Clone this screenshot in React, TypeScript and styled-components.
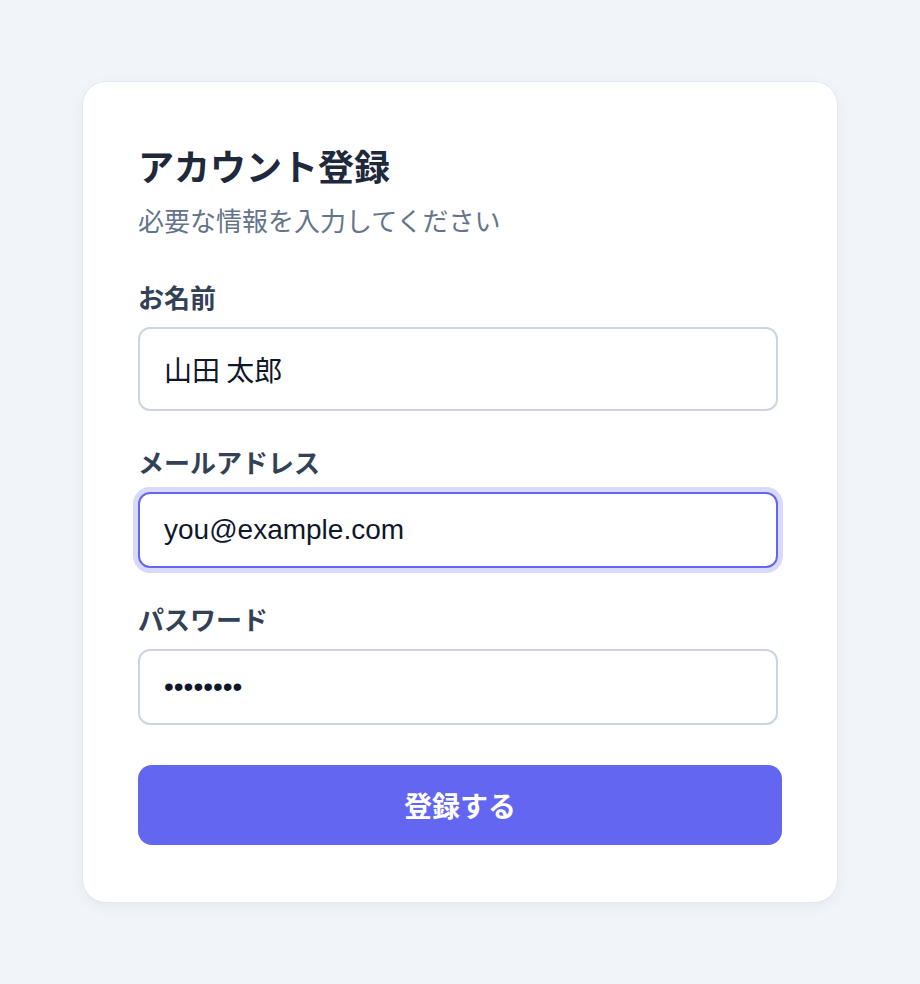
import React from "react";
import styled, { createGlobalStyle } from "styled-components";

const GlobalStyle = createGlobalStyle`
  html, body {
    margin: 0;
    padding: 0;
    background: #f1f5f9;
  }
  body {
    font-family: "Liberation Sans", "Noto Sans CJK JP", sans-serif;
  }
  * { box-sizing: border-box; }
`;

const Page = styled.div`
  min-height: 984px;
  display: flex;
  align-items: center;
  justify-content: center;
`;

const Card = styled.div`
  width: 756px;
  background: #ffffff;
  border: 1px solid #e2e8f0;
  border-radius: 24px;
  padding: 57px 55px 57px;
  box-shadow: 0 4px 14px rgba(15, 23, 42, 0.05);
  display: flex;
  flex-direction: column;
`;

const Title = styled.h1`
  margin: 0;
  font-size: 36px;
  font-weight: 700;
  color: #1e293b;
`;

const Subtitle = styled.p`
  margin: 10px 0 40px;
  font-size: 26px;
  color: #64748b;
`;

const Form = styled.form`
  display: flex;
  flex-direction: column;
  gap: 32px;
`;

const Field = styled.div`
  display: flex;
  flex-direction: column;
  gap: 12px;
`;

const Label = styled.label`
  font-size: 26px;
  font-weight: 700;
  color: #334155;
`;

const Input = styled.input<{ $focused?: boolean; $cjk?: boolean }>`
  width: calc(100% - 4px);
  padding: 20px 24px;
  font-family: ${(p) =>
    p.$cjk
      ? `"Noto Sans CJK JP", "Liberation Sans", sans-serif`
      : `"Liberation Sans", "Noto Sans CJK JP", sans-serif`};
  font-size: 28px;
  color: #0f172a;
  background: #ffffff;
  border: 2px solid ${(p) => (p.$focused ? "#6366f1" : "#cbd5e1")};
  border-radius: 12px;
  outline: none;
  box-shadow: ${(p) => (p.$focused ? "0 0 0 5px rgba(99, 102, 241, 0.25)" : "none")};
`;

const Button = styled.button`
  margin-top: 8px;
  width: 100%;
  height: 80px;
  border: none;
  border-radius: 14px;
  background: #6366f1;
  color: #ffffff;
  font-family: "Liberation Sans", "Noto Sans CJK JP", sans-serif;
  font-size: 28px;
  font-weight: 700;
  cursor: pointer;
`;

export default function App() {
  return (
    <>
      <GlobalStyle />
      <Page>
        <Card>
          <Title>アカウント登録</Title>
          <Subtitle>必要な情報を入力してください</Subtitle>
          <Form onSubmit={(e) => e.preventDefault()}>
            <Field>
              <Label htmlFor="name">お名前</Label>
              <Input id="name" type="text" defaultValue="山田 太郎" $cjk />
            </Field>
            <Field>
              <Label htmlFor="email">メールアドレス</Label>
              <Input id="email" type="email" defaultValue="you@example.com" $focused />
            </Field>
            <Field>
              <Label htmlFor="password">パスワード</Label>
              <Input id="password" type="password" defaultValue="password" />
            </Field>
            <Button type="submit">登録する</Button>
          </Form>
        </Card>
      </Page>
    </>
  );
}
